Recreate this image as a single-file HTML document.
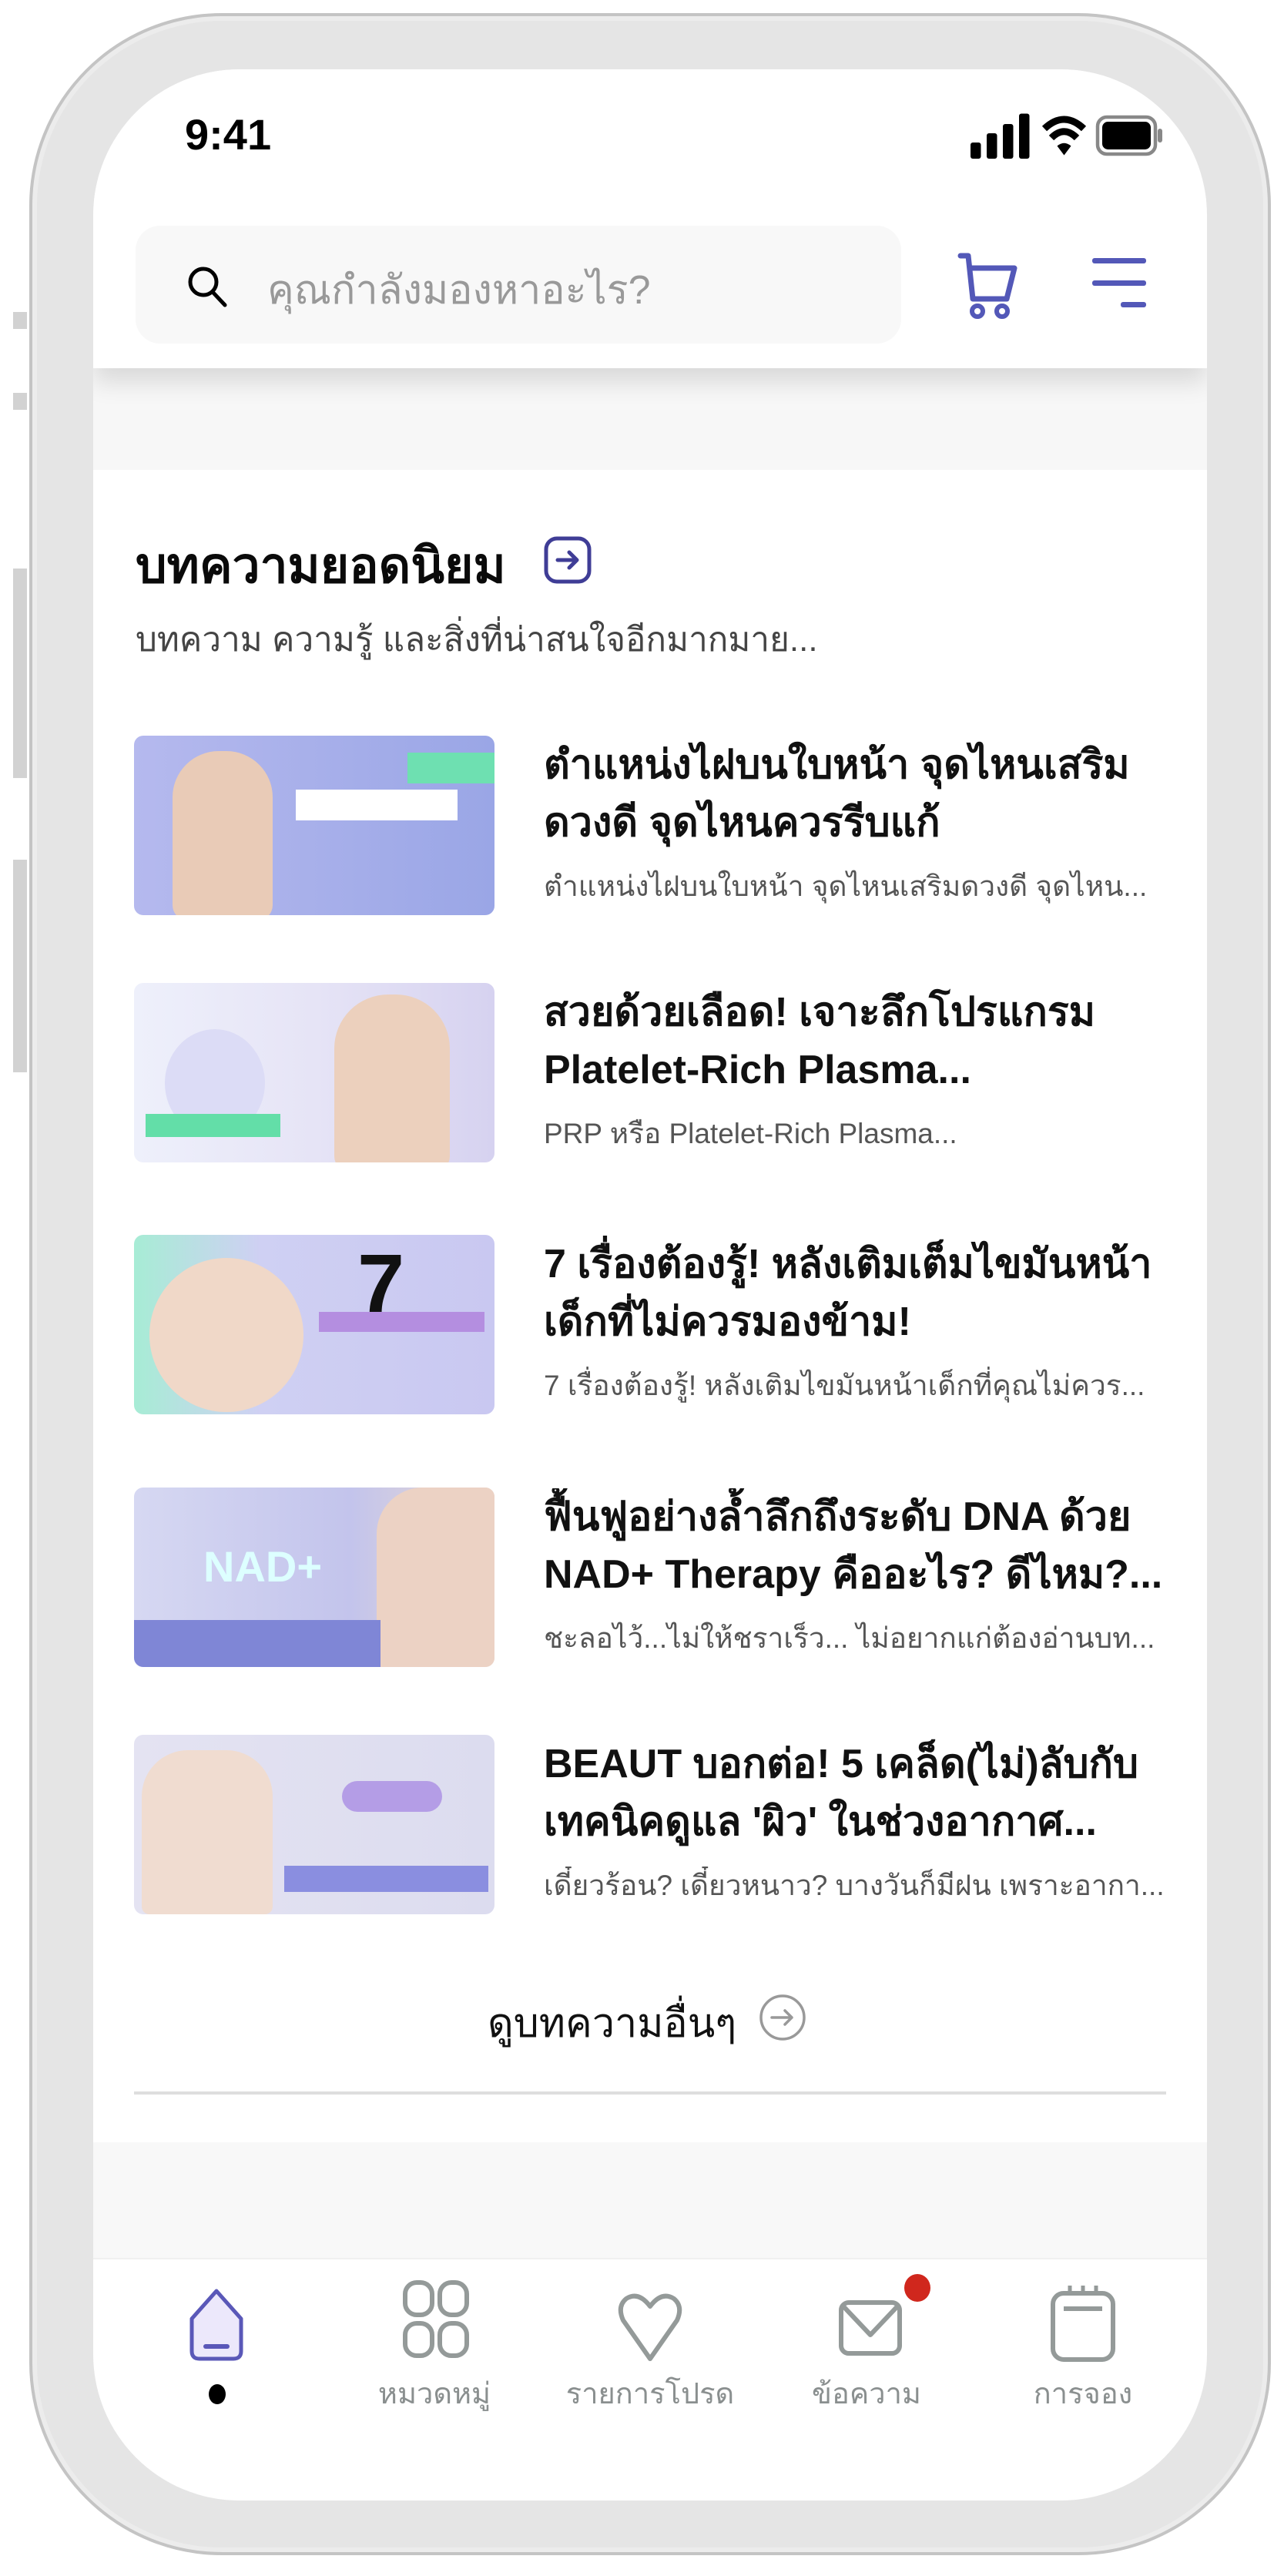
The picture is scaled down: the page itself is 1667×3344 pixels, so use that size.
<!DOCTYPE html>
<html><head><meta charset="utf-8">
<style>
*{margin:0;padding:0;box-sizing:border-box}
body{width:1667px;height:3344px;background:#fff;position:relative;overflow:hidden;font-family:"Liberation Sans","DejaVu Sans",sans-serif}
.abs{position:absolute}
.phone{left:38px;top:17px;width:1612px;height:3300px;border-radius:250px;background:#e5e5e5;border:4px solid #c4c4c4;box-shadow:inset 0 0 0 6px #ececec}
.btn{background:#d2d2d2;left:17px;width:18px}
.screen{left:121px;top:90px;width:1446px;height:3156px;border-radius:190px;background:#fff;overflow:hidden}
.t{white-space:nowrap;overflow:hidden}
.img{left:53px;width:468px;height:233px;border-radius:12px;overflow:hidden}
.ttl{left:585px;width:860px;font-size:52px;font-weight:bold;color:#111;line-height:75px}
.desc{left:585px;width:860px;font-size:37px;color:#555;line-height:50px}
.lbl{font-size:38px;color:#8a8f8f;width:260px;text-align:center;top:2986px}
</style></head><body>
<div class="abs btn" style="top:405px;height:22px"></div>
<div class="abs btn" style="top:510px;height:22px"></div>
<div class="abs btn" style="top:738px;height:272px"></div>
<div class="abs btn" style="top:1116px;height:276px"></div>
<div class="abs phone"></div>
<div class="abs screen">
  <div class="abs" style="left:0;top:0;width:1446px;height:388px;background:#fff;box-shadow:0 18px 30px rgba(0,0,0,0.12);z-index:2"></div>
  <div class="abs t" style="left:119px;top:52px;font-size:56px;font-weight:bold;color:#000;z-index:5">9:41</div>
  <svg class="abs" style="left:1136px;top:50px;z-index:5" width="255" height="75" viewBox="0 0 170 50">
    <rect x="2" y="30" width="9" height="14" rx="2"/><rect x="16" y="22" width="9" height="22" rx="2"/><rect x="30" y="14" width="9" height="30" rx="2"/><rect x="44" y="5" width="9" height="39" rx="2"/>
    <path d="M66 18 Q83 2 100 18" stroke="#000" stroke-width="6" fill="none"/><path d="M72 26 Q83 15 94 26" stroke="#000" stroke-width="6" fill="none"/><path d="M77 33 L83 41 L89 33 Q83 28 77 33Z"/>
    <rect x="112" y="8" width="50" height="32" rx="8" fill="none" stroke="#888" stroke-width="3"/><rect x="116" y="12" width="42" height="24" rx="5"/><rect x="164" y="18" width="4" height="12" rx="2" fill="#888"/>
  </svg>
  <div class="abs" style="left:55px;top:203px;width:994px;height:153px;border-radius:32px;background:#f8f8f8;z-index:3"></div>
  <svg class="abs" style="left:119px;top:252px;z-index:4" width="60" height="60" viewBox="0 0 60 60"><circle cx="24" cy="24" r="17" stroke="#000" stroke-width="5" fill="none"/><path d="M36 37 L52 54" stroke="#000" stroke-width="5" stroke-linecap="round"/></svg>
  <div class="abs t" style="left:226px;top:244px;font-size:52px;color:#999;z-index:4">คุณกำลังมองหาอะไร?</div>
  <svg class="abs" style="left:1120px;top:236px;z-index:4" width="84" height="90" viewBox="0 0 84 90"><path d="M6 6 H16 L22 62 H66 L76 22 H20" stroke="#5358b8" stroke-width="7" fill="none" stroke-linejoin="round" stroke-linecap="round"/><circle cx="28" cy="78" r="7" stroke="#5358b8" stroke-width="6" fill="none"/><circle cx="60" cy="78" r="7" stroke="#5358b8" stroke-width="6" fill="none"/></svg>
  <div class="abs" style="left:1297px;top:245px;width:70px;height:7px;background:#5358b8;border-radius:3px;z-index:4"></div>
  <div class="abs" style="left:1297px;top:274px;width:70px;height:7px;background:#5358b8;border-radius:3px;z-index:4"></div>
  <div class="abs" style="left:1334px;top:302px;width:33px;height:7px;background:#5358b8;border-radius:3px;z-index:4"></div>
  <div class="abs" style="left:0;top:388px;width:1446px;height:132px;background:#f7f7f7"></div>
  <div class="abs" style="left:0;top:2691px;width:1446px;height:150px;background:#f8f8f8"></div>
  <div class="abs t" style="left:55px;top:593px;font-size:64px;font-weight:bold;color:#0a0a0a">บทความยอดนิยม</div>
  <svg class="abs" style="left:585px;top:606px" width="62" height="62" viewBox="0 0 62 62"><rect x="3" y="3" width="56" height="56" rx="14" stroke="#3f3d96" stroke-width="5" fill="none"/><path d="M18 31 H43 M33 21 L43 31 L33 41" stroke="#3f3d96" stroke-width="5" fill="none" stroke-linecap="round" stroke-linejoin="round"/></svg>
  <div class="abs t" style="left:55px;top:705px;font-size:44px;color:#444">บทความ ความรู้ และสิ่งที่น่าสนใจอีกมากมาย...</div>

  <div class="abs img" style="top:865px;background:linear-gradient(90deg,#b5b9ee,#9aa6e6)"><div class="abs" style="left:50px;top:20px;width:130px;height:220px;border-radius:60px 60px 20px 20px;background:#e9cbb7"></div><div class="abs" style="left:355px;top:22px;width:113px;height:40px;background:#6ee0b1"></div><div class="abs" style="left:210px;top:70px;width:210px;height:40px;background:#fff"></div></div>
  <div class="abs t ttl" style="top:866px">ตำแหน่งไฝบนใบหน้า จุดไหนเสริม</div>
  <div class="abs t ttl" style="top:941px">ดวงดี จุดไหนควรรีบแก้</div>
  <div class="abs t desc" style="top:1036px">ตำแหน่งไฝบนใบหน้า จุดไหนเสริมดวงดี จุดไหน...</div>

  <div class="abs img" style="top:1186px;background:linear-gradient(90deg,#eef0fb,#e6e4f6 50%,#d6d2f0)"><div class="abs" style="left:260px;top:15px;width:150px;height:230px;border-radius:70px 70px 20px 20px;background:#ecd0bd"></div><div class="abs" style="left:40px;top:60px;width:130px;height:140px;border-radius:50%;background:#dcdcf6"></div><div class="abs" style="left:15px;top:170px;width:175px;height:30px;background:#63dea8"></div></div>
  <div class="abs t ttl" style="top:1187px">สวยด้วยเลือด! เจาะลึกโปรแกรม</div>
  <div class="abs t ttl" style="top:1262px">Platelet-Rich Plasma...</div>
  <div class="abs t desc" style="top:1357px">PRP หรือ Platelet-Rich Plasma...</div>

  <div class="abs img" style="top:1513px;background:linear-gradient(90deg,#a7ecd5,#cfd0f3 35%,#c9c8f1)"><div class="abs" style="left:20px;top:30px;width:200px;height:200px;border-radius:50%;background:#f0d8c8"></div><div class="abs" style="left:290px;top:10px;width:50px;height:110px;font-size:110px;font-weight:bold;line-height:110px;color:#111">7</div><div class="abs" style="left:240px;top:100px;width:215px;height:26px;background:#b48ee0"></div></div>
  <div class="abs t ttl" style="top:1514px">7 เรื่องต้องรู้! หลังเติมเต็มไขมันหน้า</div>
  <div class="abs t ttl" style="top:1589px">เด็กที่ไม่ควรมองข้าม!</div>
  <div class="abs t desc" style="top:1684px">7 เรื่องต้องรู้! หลังเติมไขมันหน้าเด็กที่คุณไม่ควร...</div>

  <div class="abs img" style="top:1841px;background:linear-gradient(90deg,#d6d8f2,#c3c4ec 60%,#e8d9d2)"><div class="abs" style="left:315px;top:0;width:153px;height:233px;background:#ecd2c4;border-radius:60px 0 0 0"></div><div class="abs" style="left:0;top:172px;width:320px;height:61px;background:#7f86d6"></div><div class="abs" style="left:90px;top:70px;font-size:56px;font-weight:bold;color:#dff;">NAD+</div></div>
  <div class="abs t ttl" style="top:1842px">ฟื้นฟูอย่างล้ำลึกถึงระดับ DNA ด้วย</div>
  <div class="abs t ttl" style="top:1917px">NAD+ Therapy คืออะไร? ดีไหม?...</div>
  <div class="abs t desc" style="top:2012px">ชะลอไว้...ไม่ให้ชราเร็ว... ไม่อยากแก่ต้องอ่านบท...</div>

  <div class="abs img" style="top:2162px;background:linear-gradient(90deg,#e4e3f2,#dcdcef)"><div class="abs" style="left:10px;top:20px;width:170px;height:213px;border-radius:60px 60px 10px 10px;background:#f0dcd0"></div><div class="abs" style="left:195px;top:170px;width:265px;height:34px;background:#8a8ee0"></div><div class="abs" style="left:270px;top:60px;width:130px;height:40px;border-radius:20px;background:#b49de6"></div></div>
  <div class="abs t ttl" style="top:2163px">BEAUT บอกต่อ! 5 เคล็ด(ไม่)ลับกับ</div>
  <div class="abs t ttl" style="top:2238px">เทคนิคดูแล 'ผิว' ในช่วงอากาศ...</div>
  <div class="abs t desc" style="top:2333px">เดี๋ยวร้อน? เดี๋ยวหนาว? บางวันก็มีฝน เพราะอากา...</div>

  <div class="abs t" style="left:512px;top:2494px;font-size:52px;color:#111">ดูบทความอื่นๆ</div>
  <svg class="abs" style="left:863px;top:2497px" width="64" height="64" viewBox="0 0 64 64"><circle cx="32" cy="32" r="28" stroke="#999" stroke-width="3.5" fill="none"/><path d="M18 32 H44 M35 23 L44 32 L35 41" stroke="#999" stroke-width="3.5" fill="none" stroke-linecap="round" stroke-linejoin="round"/></svg>
  <div class="abs" style="left:53px;top:2625px;width:1340px;height:4px;background:#dedede"></div>

  <div class="abs" style="left:0;top:2841px;width:1446px;height:2px;background:#f0f0f0"></div>
  <svg class="abs" style="left:120px;top:2878px" width="80" height="100" viewBox="0 0 80 100"><path d="M40 6 L72 42 V84 Q72 94 62 94 H18 Q8 94 8 84 V42 Z" fill="#ece8fb" stroke="#5a58b8" stroke-width="5" stroke-linejoin="round"/><path d="M26 78 H54" stroke="#5a58b8" stroke-width="6" stroke-linecap="round"/></svg>
  <div class="abs" style="left:150px;top:3005px;width:22px;height:26px;border-radius:50%;background:#000"></div>
  <svg class="abs" style="left:400px;top:2868px" width="90" height="105" viewBox="0 0 90 105"><g fill="none" stroke="#949a99" stroke-width="6"><rect x="5" y="5" width="35" height="42" rx="15"/><rect x="50" y="5" width="35" height="42" rx="15"/><rect x="5" y="58" width="35" height="42" rx="15"/><rect x="50" y="58" width="35" height="42" rx="15"/></g></svg>
  <div class="abs t lbl" style="left:313px">หมวดหมู่</div>
  <svg class="abs" style="left:680px;top:2886px" width="86" height="92" viewBox="0 0 86 92"><path d="M43 86 L8 36 Q0 18 12 8 Q28 -2 43 18 Q58 -2 74 8 Q86 18 78 36 Z" fill="none" stroke="#949a99" stroke-width="6" stroke-linejoin="round"/></svg>
  <div class="abs t lbl" style="left:593px">รายการโปรด</div>
  <svg class="abs" style="left:965px;top:2893px" width="90" height="80" viewBox="0 0 90 80"><rect x="6" y="6" width="76" height="66" rx="10" fill="none" stroke="#949a99" stroke-width="6"/><path d="M8 10 L44 48 L80 10" fill="none" stroke="#949a99" stroke-width="6" stroke-linejoin="round"/></svg>
  <div class="abs" style="left:1053px;top:2862px;width:34px;height:36px;border-radius:50%;background:#d0271d"></div>
  <div class="abs t lbl" style="left:874px">ข้อความ</div>
  <svg class="abs" style="left:1240px;top:2873px" width="90" height="105" viewBox="0 0 90 105"><rect x="6" y="14" width="78" height="86" rx="14" fill="none" stroke="#949a99" stroke-width="6"/><path d="M20 34 H70" stroke="#949a99" stroke-width="6"/><path d="M28 4 V16 M45 4 V16 M62 4 V16" stroke="#949a99" stroke-width="5"/></svg>
  <div class="abs t lbl" style="left:1155px">การจอง</div>
</div>
</body></html>
